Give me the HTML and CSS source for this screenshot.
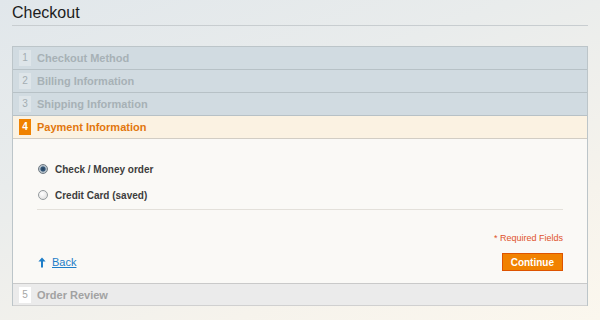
FILE: index.html
```html
<!DOCTYPE html>
<html>
<head>
   <meta charset="utf-8">
   <title>Checkout</title>
   <link rel="stylesheet" href="styles.css">
</head>
<body>
   <div class="page">
      <div class="page-title">
         <h1>Checkout</h1>
      </div>

      <ol class="opc">
         <li class="section">
            <div class="step-title"><span class="number">1</span><h2>Checkout Method</h2></div>
         </li>
         <li class="section">
            <div class="step-title"><span class="number">2</span><h2>Billing Information</h2></div>
         </li>
         <li class="section">
            <div class="step-title"><span class="number">3</span><h2>Shipping Information</h2></div>
         </li>
         <li class="section active">
            <div class="step-title"><span class="number">4</span><h2>Payment Information</h2></div>
            <div class="step">
               <ul class="methods">
                  <li>
                     <input type="radio" name="payment" id="p_checkmo" checked>
                     <label for="p_checkmo">Check / Money order</label>
                  </li>
                  <li>
                     <input type="radio" name="payment" id="p_ccsave">
                     <label for="p_ccsave">Credit Card (saved)</label>
                  </li>
               </ul>
               <p class="required">* Required Fields</p>
               <div class="buttons-set">
                  <a href="#" class="back">
                     <svg width="8" height="11" viewBox="0 0 8 11"><path d="M4 0.5 L7.6 4.6 L5 4.6 L5 10.5 L3 10.5 L3 4.6 L0.4 4.6 Z" fill="#1e7ec8"/></svg>
                     <span>Back</span>
                  </a>
                  <button type="button" class="button">Continue</button>
               </div>
            </div>
         </li>
         <li class="section last">
            <div class="step-title"><span class="number">5</span><h2>Order Review</h2></div>
         </li>
      </ol>
   </div>
</body>
</html>
```

FILE: styles.css
```css
html, body {
   height: 100%;
}
body {
   margin: 0;
   font-family: Arial, "Liberation Sans", Helvetica, sans-serif;
   background: linear-gradient(160deg, #e1e7eb 0%, #e9ecec 35%, #f6f3ec 75%, #fbf7ee 100%);
}
.page {
   padding: 0 12px;
}
.page-title {
   padding-top: 3px;
   height: 22px;
   border-bottom: 1px solid #c8cdd0;
}
.page-title h1 {
   margin: 0;
   font-size: 16px;
   font-weight: normal;
   line-height: 20px;
   color: #1c1c1c;
}
.opc {
   list-style: none;
   margin: 20px 0 0;
   padding: 0;
   border: 1px solid #bcc5c9;
   border-bottom: none;
}
.step-title {
   display: flex;
   align-items: center;
   height: 22px;
   background: #d1dbe1;
   border-bottom: 1px solid #b7c1c6;
}
.step-title .number {
   width: 12px;
   height: 16px;
   margin: 0 6px;
   background: #dee5e9;
   color: #a3adb2;
   font-size: 10px;
   line-height: 16px;
   text-align: center;
}
.step-title h2 {
   margin: 0;
   font-size: 11px;
   font-weight: bold;
   color: #a7b1b6;
}
.active .step-title {
   background: #fbf2e2;
   border-bottom-color: #d2cdc4;
}
.active .step-title .number {
   background: #f08200;
   color: #fff;
   font-weight: bold;
}
.active .step-title h2 {
   color: #e2770e;
}
.last .step-title {
   height: 21px;
   background: #ebebeb;
   border-bottom-color: #d0d0d0;
}
.last .step-title .number {
   background: #fff;
   color: #a6a6a6;
}
.last .step-title h2 {
   color: #a2a2a2;
}
.step {
   background: #faf9f6;
   padding: 17px 24px 12px 24px;
   border-bottom: 1px solid #c9c9c9;
}
.methods {
   list-style: none;
   margin: 0;
   padding: 0 0 1px;
   border-bottom: 1px solid #e3e0da;
}
.methods li {
   display: flex;
   align-items: center;
   height: 26px;
}
.methods input {
   appearance: none;
   -webkit-appearance: none;
   width: 10px;
   height: 10px;
   margin: 0 7px 0 1px;
   border-radius: 50%;
   border: 1px solid #959b9e;
   background: radial-gradient(circle at 40% 35%, #ffffff 0%, #e4e4e4 70%, #cfcfcf 100%);
}
.methods input:checked {
   border-color: #6f7a82;
   background: radial-gradient(circle, #23405c 0%, #34587a 38%, #a9b7c2 52%, #dfe4e8 100%);
}
.methods label {
   font-size: 10px;
   font-weight: bold;
   color: #3d3d3d;
}
.required {
   margin: 22px 0 0;
   font-size: 9px;
   line-height: 12px;
   text-align: right;
   color: #e0522b;
}
.buttons-set {
   display: flex;
   align-items: center;
   justify-content: space-between;
   margin-top: 9px;
   height: 18px;
}
.back {
   display: flex;
   align-items: center;
   gap: 6px;
   margin-left: 1px;
   font-size: 11px;
   color: #1e7ec8;
}
.back svg {
   display: block;
}
.button {
   height: 18px;
   padding: 0 8px;
   border: 1px solid #de5400;
   background: #f18200;
   color: #fff;
   font-family: Arial, "Liberation Sans", Helvetica, sans-serif;
   font-size: 10px;
   font-weight: bold;
}
```
